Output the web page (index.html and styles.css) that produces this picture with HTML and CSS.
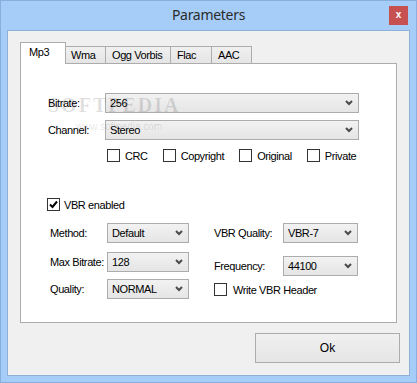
FILE: index.html
```html
<!DOCTYPE html>
<html lang="en">
<head>
  <meta charset="UTF-8">
  <title>Parameters</title>
  <link rel="stylesheet" href="styles.css">
</head>
<body>
  <div class="window">
    <div class="titlebar">
      <span></span>
      <div class="title">Parameters</div>
      <div class="close">x</div>
    </div>
    <div class="client">
      <div class="tabs">
        <div class="tab active">Mp3</div>
        <div class="tab">Wma</div>
        <div class="tab">Ogg Vorbis</div>
        <div class="tab">Flac</div>
        <div class="tab">AAC</div>
      </div>
      <div class="panel">
        <div class="watermark">SOFTPEDIA<span>www.softpedia.com</span></div>
        <div class="row wide">
          <label class="lbl">Bitrate:</label>
          <div class="select"><span>256</span><svg width="8" height="6" viewBox="0 0 8 6"><polyline points="1,1 4,4 7,1" fill="none" stroke="#4a4a4a" stroke-width="2"/></svg></div>
        </div>
        <div class="row wide second">
          <label class="lbl">Channel:</label>
          <div class="select"><span>Stereo</span><svg width="8" height="6" viewBox="0 0 8 6"><polyline points="1,1 4,4 7,1" fill="none" stroke="#4a4a4a" stroke-width="2"/></svg></div>
        </div>
        <div class="flags">
          <label class="check"><span class="box"></span>CRC</label>
          <label class="check"><span class="box"></span>Copyright</label>
          <label class="check"><span class="box"></span>Original</label>
          <label class="check"><span class="box"></span>Private</label>
        </div>
        <label class="check vbr"><span class="box"><svg width="11" height="11" viewBox="0 0 11 11"><polyline points="2,5.5 4.5,8 9,2.5" fill="none" stroke="#000" stroke-width="2"/></svg></span>VBR enabled</label>
        <div class="cols">
          <div class="col left">
            <div class="row">
              <label class="lbl">Method:</label>
              <div class="select"><span>Default</span><svg width="8" height="6" viewBox="0 0 8 6"><polyline points="1,1 4,4 7,1" fill="none" stroke="#4a4a4a" stroke-width="2"/></svg></div>
            </div>
            <div class="row r2">
              <label class="lbl">Max Bitrate:</label>
              <div class="select"><span>128</span><svg width="8" height="6" viewBox="0 0 8 6"><polyline points="1,1 4,4 7,1" fill="none" stroke="#4a4a4a" stroke-width="2"/></svg></div>
            </div>
            <div class="row r3">
              <label class="lbl">Quality:</label>
              <div class="select"><span>NORMAL</span><svg width="8" height="6" viewBox="0 0 8 6"><polyline points="1,1 4,4 7,1" fill="none" stroke="#4a4a4a" stroke-width="2"/></svg></div>
            </div>
          </div>
          <div class="col right">
            <div class="row">
              <label class="lbl">VBR Quality:</label>
              <div class="select"><span>VBR-7</span><svg width="8" height="6" viewBox="0 0 8 6"><polyline points="1,1 4,4 7,1" fill="none" stroke="#4a4a4a" stroke-width="2"/></svg></div>
            </div>
            <div class="row r2">
              <label class="lbl">Frequency:</label>
              <div class="select"><span>44100</span><svg width="8" height="6" viewBox="0 0 8 6"><polyline points="1,1 4,4 7,1" fill="none" stroke="#4a4a4a" stroke-width="2"/></svg></div>
            </div>
            <label class="check header"><span class="box"></span>Write VBR Header</label>
          </div>
        </div>
      </div>
      <div class="actions">
        <button class="ok">Ok</button>
      </div>
    </div>
  </div>
</body>
</html>
```

FILE: styles.css
```css
body {
  margin: 0;
  font-family: 'Liberation Sans', Arial, sans-serif;
  font-size: 11px;
  letter-spacing: -0.4px;
  color: #000;
}
.window {
  width: 417px;
  height: 383px;
  box-sizing: border-box;
  background: #a5cdf8;
  border: 1px solid #88aede;
  padding: 0 6px 6px 6px;
  display: flex;
  flex-direction: column;
}
.titlebar {
  height: 29px;
  display: grid;
  grid-template-columns: 1fr auto 1fr;
  align-items: start;
}
.title {
  font-family: 'Noto Sans', 'Open Sans', sans-serif;
  font-size: 14px;
  letter-spacing: -0.3px;
  color: #2b2b2b;
  line-height: 28px;
}
.close {
  justify-self: end;
  margin: 5px 2px 0 0;
  width: 19px;
  height: 19px;
  background: #c75050;
  color: #fff;
  font-weight: bold;
  font-size: 10px;
  letter-spacing: 0;
  line-height: 18px;
  text-align: center;
}
.client {
  flex: 1;
  background: #f0f0f0;
  border: 1px solid #8fb0d6;
  display: flex;
  flex-direction: column;
}
.tabs {
  display: flex;
  align-items: flex-end;
  margin: 11px 0 0 12px;
  height: 21px;
}
.tab {
  box-sizing: border-box;
  height: 17px;
  line-height: 17px;
  padding-left: 6px;
  border: 1px solid #acacac;
  border-bottom: none;
  background: linear-gradient(#f0f0f0, #e5e5e5);
  margin-left: -1px;
}
.tab:nth-child(2) { width: 41px; padding-left: 5px; }
.tab:nth-child(3) { width: 66px; }
.tab:nth-child(4) { width: 42px; }
.tab:nth-child(5) { width: 41px; }
.tab.active {
  width: 46px;
  height: 22px;
  line-height: 19px;
  padding-left: 8px;
  margin-left: 0;
  margin-bottom: -1px;
  background: #fff;
  position: relative;
  z-index: 1;
}
.panel {
  position: relative;
  box-sizing: border-box;
  margin: 0 12px;
  height: 260px;
  background: #fff;
  border: 1px solid #acacac;
  padding: 29px 0 0 27px;
}
.watermark {
  position: absolute;
  z-index: 2;
  left: 27px;
  top: 30px;
  font-family: 'Liberation Serif', serif;
  font-weight: bold;
  font-size: 20px;
  letter-spacing: 2px;
  color: rgba(0, 0, 0, 0.12);
  pointer-events: none;
}
.watermark span {
  display: block;
  margin: 4px 0 0 28px;
  font-family: 'Liberation Sans', sans-serif;
  font-weight: normal;
  font-size: 10px;
  letter-spacing: 0;
}
.row {
  display: flex;
  align-items: center;
  height: 20px;
}
.row.second {
  margin-top: 7px;
}
.lbl {
  width: 57px;
  flex: none;
  white-space: nowrap;
}
.select {
  height: 18px;
  border: 1px solid #acacac;
  background: linear-gradient(#f2f2f2, #e5e5e5);
  display: flex;
  align-items: center;
  justify-content: space-between;
  padding: 0 5px 0 4px;
  box-sizing: content-box;
}
.row.wide .select {
  width: 243px;
}
.flags {
  display: flex;
  gap: 15px;
  margin: 9px 0 0 59px;
  height: 13px;
}
.check {
  display: flex;
  align-items: center;
  gap: 4px;
  height: 13px;
  white-space: nowrap;
}
.box {
  width: 11px;
  height: 11px;
  border: 1px solid #333;
  background: #fff;
  display: flex;
  flex: none;
}
.flags .check {
  gap: 5px;
}
.vbr {
  margin: 36px 0 0 -1px;
  gap: 4px;
}
.cols {
  display: flex;
  margin: 12px 0 0 2px;
}
.col.left {
  width: 164px;
}
.col.left .select {
  width: 71px;
}
.col.left .r2 {
  margin-top: 9px;
}
.col.left .r3 {
  margin-top: 7px;
}
.col.right .lbl {
  width: 69px;
}
.col.right .select {
  width: 64px;
}
.col.right .r2 {
  margin-top: 13px;
}
.header {
  margin-top: 7px;
  gap: 6px;
}
.actions {
  display: flex;
  justify-content: flex-end;
  padding: 10px 9px 0 0;
}
.ok {
  width: 145px;
  height: 30px;
  border: 1px solid #acacac;
  background: linear-gradient(#f0f0f0, #e5e5e5);
  font-family: 'Liberation Sans', Arial, sans-serif;
  font-size: 12px;
  color: #000;
  padding: 0;
}
```
